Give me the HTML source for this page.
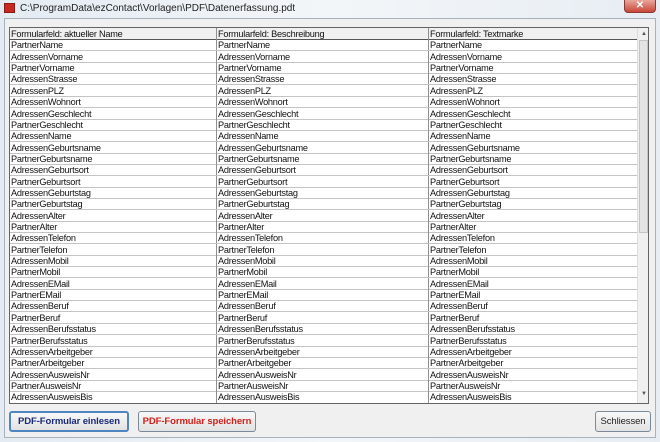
<!DOCTYPE html>
<html><head><meta charset="utf-8"><style>
*{margin:0;padding:0;box-sizing:border-box}
body{width:660px;height:442px;overflow:hidden;background:#dfe7ef;font-family:"Liberation Sans",sans-serif;position:relative}
.win{position:absolute;left:0;top:0;width:660px;height:442px;background:linear-gradient(90deg,#e4ebf2,#f3f6f9 50%,#e7edf3)}
.title{position:absolute;left:20px;top:3px;font-size:10px;color:#222}
.icon{position:absolute;left:4px;top:3px;width:11px;height:10px;background:#c8281e;border:1px solid #8a1a14}
.close{position:absolute;left:624px;top:0;width:32px;height:13px;background:linear-gradient(#e8a79b,#c9463a);border:1px solid #8b3a33;border-top:none;border-radius:0 0 4px 4px;color:#fff;font-size:10px;text-align:center;line-height:12px;font-weight:bold}
.panel{position:absolute;left:4px;top:18px;width:652px;height:420px;background:#f0f0f0;border:1px solid #a8b2bc}
.grid{position:absolute;left:9px;top:27px;width:640px;height:377px;background:#fff;border:1px solid #646464}
.r{position:absolute;left:0;width:627px;height:12px;border-bottom:1px solid #c4c4c4;font-size:9.2px;line-height:12px;color:#111;letter-spacing:-0.25px}
.r span{position:absolute;top:0;height:100%;padding-left:1px;white-space:nowrap;overflow:hidden}
.r span:nth-child(1){left:0;width:206px}
.r span:nth-child(2){left:206px;width:212px;border-left:1px solid #909090}
.r span:nth-child(3){left:418px;width:209px;border-left:1px solid #909090}
.h{background:#f0f0f0;border-bottom:1px solid #555}
.sb{position:absolute;left:627px;top:0;width:11px;height:375px;background:#f0f0f0;border-left:1px solid #ddd}
.sb .th{position:absolute;left:1px;top:12px;width:9px;height:193px;background:#e4e4e4;border:1px solid #c4c4c4}
.btn{position:absolute;top:411px;height:21px;font-size:9.5px;font-weight:bold;text-align:center;line-height:18px;border-radius:3px;background:linear-gradient(#f8f8f8,#e2e2e2);white-space:nowrap;letter-spacing:-0.1px}
</style></head><body><div class="win">
<div class="icon"></div><div class="title">C:\ProgramData\ezContact\Vorlagen\PDF\Datenerfassung.pdt</div>
<div class="close">✕</div>
<div class="panel"></div>
<div class="grid">
<div class="r h" style="top:0"><span>Formularfeld: aktueller Name</span><span>Formularfeld: Beschreibung</span><span>Formularfeld: Textmarke</span></div>
<div class="r" style="top:11.4px"><span>PartnerName</span><span>PartnerName</span><span>PartnerName</span></div>
<div class="r" style="top:22.75px"><span>AdressenVorname</span><span>AdressenVorname</span><span>AdressenVorname</span></div>
<div class="r" style="top:34.1px"><span>PartnerVorname</span><span>PartnerVorname</span><span>PartnerVorname</span></div>
<div class="r" style="top:45.45px"><span>AdressenStrasse</span><span>AdressenStrasse</span><span>AdressenStrasse</span></div>
<div class="r" style="top:56.8px"><span>AdressenPLZ</span><span>AdressenPLZ</span><span>AdressenPLZ</span></div>
<div class="r" style="top:68.15px"><span>AdressenWohnort</span><span>AdressenWohnort</span><span>AdressenWohnort</span></div>
<div class="r" style="top:79.5px"><span>AdressenGeschlecht</span><span>AdressenGeschlecht</span><span>AdressenGeschlecht</span></div>
<div class="r" style="top:90.85px"><span>PartnerGeschlecht</span><span>PartnerGeschlecht</span><span>PartnerGeschlecht</span></div>
<div class="r" style="top:102.2px"><span>AdressenName</span><span>AdressenName</span><span>AdressenName</span></div>
<div class="r" style="top:113.55px"><span>AdressenGeburtsname</span><span>AdressenGeburtsname</span><span>AdressenGeburtsname</span></div>
<div class="r" style="top:124.9px"><span>PartnerGeburtsname</span><span>PartnerGeburtsname</span><span>PartnerGeburtsname</span></div>
<div class="r" style="top:136.25px"><span>AdressenGeburtsort</span><span>AdressenGeburtsort</span><span>AdressenGeburtsort</span></div>
<div class="r" style="top:147.6px"><span>PartnerGeburtsort</span><span>PartnerGeburtsort</span><span>PartnerGeburtsort</span></div>
<div class="r" style="top:158.95px"><span>AdressenGeburtstag</span><span>AdressenGeburtstag</span><span>AdressenGeburtstag</span></div>
<div class="r" style="top:170.3px"><span>PartnerGeburtstag</span><span>PartnerGeburtstag</span><span>PartnerGeburtstag</span></div>
<div class="r" style="top:181.65px"><span>AdressenAlter</span><span>AdressenAlter</span><span>AdressenAlter</span></div>
<div class="r" style="top:193px"><span>PartnerAlter</span><span>PartnerAlter</span><span>PartnerAlter</span></div>
<div class="r" style="top:204.35px"><span>AdressenTelefon</span><span>AdressenTelefon</span><span>AdressenTelefon</span></div>
<div class="r" style="top:215.7px"><span>PartnerTelefon</span><span>PartnerTelefon</span><span>PartnerTelefon</span></div>
<div class="r" style="top:227.05px"><span>AdressenMobil</span><span>AdressenMobil</span><span>AdressenMobil</span></div>
<div class="r" style="top:238.4px"><span>PartnerMobil</span><span>PartnerMobil</span><span>PartnerMobil</span></div>
<div class="r" style="top:249.75px"><span>AdressenEMail</span><span>AdressenEMail</span><span>AdressenEMail</span></div>
<div class="r" style="top:261.1px"><span>PartnerEMail</span><span>PartnerEMail</span><span>PartnerEMail</span></div>
<div class="r" style="top:272.45px"><span>AdressenBeruf</span><span>AdressenBeruf</span><span>AdressenBeruf</span></div>
<div class="r" style="top:283.8px"><span>PartnerBeruf</span><span>PartnerBeruf</span><span>PartnerBeruf</span></div>
<div class="r" style="top:295.15px"><span>AdressenBerufsstatus</span><span>AdressenBerufsstatus</span><span>AdressenBerufsstatus</span></div>
<div class="r" style="top:306.5px"><span>PartnerBerufsstatus</span><span>PartnerBerufsstatus</span><span>PartnerBerufsstatus</span></div>
<div class="r" style="top:317.85px"><span>AdressenArbeitgeber</span><span>AdressenArbeitgeber</span><span>AdressenArbeitgeber</span></div>
<div class="r" style="top:329.2px"><span>PartnerArbeitgeber</span><span>PartnerArbeitgeber</span><span>PartnerArbeitgeber</span></div>
<div class="r" style="top:340.55px"><span>AdressenAusweisNr</span><span>AdressenAusweisNr</span><span>AdressenAusweisNr</span></div>
<div class="r" style="top:351.9px"><span>PartnerAusweisNr</span><span>PartnerAusweisNr</span><span>PartnerAusweisNr</span></div>
<div class="r" style="top:363.25px;border-bottom:none"><span>AdressenAusweisBis</span><span>AdressenAusweisBis</span><span>AdressenAusweisBis</span></div>
<div class="sb"><div style="position:absolute;left:3px;top:3px;font-size:6px;color:#555">▲</div><div class="th"></div><div style="position:absolute;left:3px;top:363px;font-size:6px;color:#555">▼</div></div>
</div>
<div class="btn" style="left:9px;width:120px;color:#1a2a7a;border:2px solid #4f86bf">PDF-Formular einlesen</div>
<div class="btn" style="left:138px;width:118px;color:#d0201a;border:1px solid #7a8a9a;line-height:19px">PDF-Formular speichern</div>
<div class="btn" style="left:595px;width:56px;color:#222;font-weight:normal;border:1px solid #7a8a9a;line-height:19px">Schliessen</div>
</div></body></html>
